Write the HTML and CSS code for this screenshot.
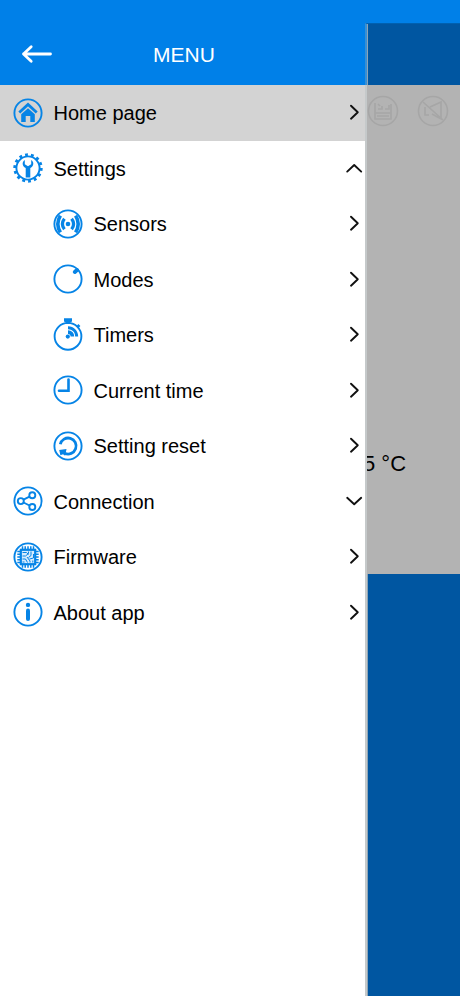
FILE: index.html
```html
<!DOCTYPE html>
<html lang="en">
<head>
<meta charset="utf-8">
<title>Menu</title>
<link rel="stylesheet" href="styles.css">
</head>
<body>
<svg class="defs" width="0" height="0">
  <symbol id="right" viewBox="0 0 20 20"><path d="M7 3.7 13.8 10.2 7 16.7"/></symbol>
  <symbol id="down" viewBox="0 0 20 20"><path d="M3.2 6.8 10.2 13.2 17.2 6.8"/></symbol>
  <symbol id="up" viewBox="0 0 20 20"><path d="M3.2 13.6 10.2 7 17.2 13.6"/></symbol>
</svg>
<div class="screen">
  <aside class="drawer">
    <header class="header">
      <svg class="back" viewBox="0 0 32 20"><path d="M30.5 10H3.5M11.2 2.8 3.5 10l7.7 7.2"/></svg>
      <h1 class="title">MENU</h1>
    </header>
    <nav class="menu">
      <a class="row active">
        <svg class="icon" viewBox="0 0 32 32"><circle cx="16" cy="16" r="13.6"/><path class="thick" d="m7.3 15.5 8.7-8 8.7 8"/><path class="fill" d="M9.2 17.2 16 11.2l6.8 6v7.8h-4.5v-6h-4.6v6H9.2z"/></svg>
        <span class="label">Home page</span><svg class="chevron"><use href="#right"/></svg>
      </a>
      <a class="row">
        <svg class="icon" viewBox="0 0 32 32"><circle cx="16" cy="16" r="11.6"/><circle class="teeth" cx="16" cy="16" r="13.2" pathLength="140"/><path class="fill" d="M12.8 7.9v4.3l3.2 2 3.2-2V7.9c2.9 1.7 3 6-.9 8.1v9.6h-4.6V16c-3.9-2.1-3.8-6.4-.9-8.1z"/></svg>
        <span class="label">Settings</span><svg class="chevron"><use href="#up"/></svg>
      </a>
      <a class="row sub">
        <svg class="icon" viewBox="0 0 32 32"><circle cx="16" cy="16" r="13.6"/><circle class="fill" cx="16" cy="16" r="2.3"/><path class="wave" d="M12.4 10.7q-4 5.3 0 10.6M19.6 10.7q4 5.3 0 10.6"/><path class="wave wide" d="M8.4 7.6q-5.2 8.4 0 16.8M23.6 7.6q5.2 8.4 0 16.8"/></svg>
        <span class="label">Sensors</span><svg class="chevron"><use href="#right"/></svg>
      </a>
      <a class="row sub">
        <svg class="icon" viewBox="0 0 32 32"><circle cx="16" cy="16" r="13.6"/><path class="knob" d="m22.8 9 2.2-2"/></svg>
        <span class="label">Modes</span><svg class="chevron"><use href="#right"/></svg>
      </a>
      <a class="row sub">
        <svg class="icon" viewBox="0 0 32 32"><circle cx="16" cy="17.3" r="13.4"/><path class="fill" d="M12-.8h8v3.2l-2 1.2V5h-4V3.600l-2-1.200z"/><path class="thick" d="m25.2 8.200 2.200-2.200"/><circle class="fill" cx="15.800" cy="17.600" r="2.100"/><path class="fill" d="M16 7.300c5.800 0 10.200 4.400 10.200 10.200h-3c0-4.200-3-7.200-7.200-7.200z"/><path class="wave wide" d="M16 13.100c2.600 0 4.400 1.800 4.400 4.400"/></svg>
        <span class="label">Timers</span><svg class="chevron"><use href="#right"/></svg>
      </a>
      <a class="row sub">
        <svg class="icon" viewBox="0 0 32 32"><circle cx="16" cy="16" r="13.6"/><path class="hand" d="M16.5 5.5v11.200H7"/></svg>
        <span class="label">Current time</span><svg class="chevron"><use href="#right"/></svg>
      </a>
      <a class="row sub">
        <svg class="icon" viewBox="0 0 32 32"><circle cx="16" cy="16" r="13.6"/><path class="thick" d="M8.300 14.300a8 8 0 1 1 4.500 9"/><path class="fill" d="m7.200 20 7.300-1-1.300 6.800-2.200-1.600-2.600 1z"/></svg>
        <span class="label">Setting reset</span><svg class="chevron"><use href="#right"/></svg>
      </a>
      <a class="row">
        <svg class="icon" viewBox="0 0 32 32"><circle cx="16" cy="16" r="13.6"/><circle cx="8.800" cy="16.100" r="3"/><circle cx="20.300" cy="10.200" r="3"/><circle cx="20.300" cy="22" r="3"/><path d="m11.500 14.700 6-3M11.500 17.500l6 3"/></svg>
        <span class="label">Connection</span><svg class="chevron"><use href="#down"/></svg>
      </a>
      <a class="row">
        <svg class="icon" viewBox="0 0 32 32"><circle cx="16" cy="16" r="13.6"/><path class="pins" d="M10.500 5.300v21.400M13.200 5.300v21.400M16 5.300v21.400M18.800 5.300v21.400M21.500 5.300v21.400M5.300 10.500h21.400M5.300 13.200h21.400M5.300 16h21.400M5.300 18.800h21.400M5.300 21.500h21.400"/><rect class="chip" x="8.800" y="8.800" width="14.400" height="14.400"/><path class="trace" d="M10.500 11.500h4l2 2M10.500 15h3l3-2.500v-2M19 10.500v4l-2.500 2M21.500 13v4l-4 1M10.500 18h3l2 3.500M10.500 21h2M15 16l3 4v1.500M20.800 19.500v2"/></svg>
        <span class="label">Firmware</span><svg class="chevron"><use href="#right"/></svg>
      </a>
      <a class="row">
        <svg class="icon" viewBox="0 0 32 32"><circle cx="16" cy="16" r="13.6"/><circle class="fill" cx="16" cy="8.900" r="2.200"/><path class="stem" d="M16 14.600v8.400"/></svg>
        <span class="label">About app</span><svg class="chevron"><use href="#right"/></svg>
      </a>
    </nav>
  </aside>
  <main class="page">
    <div class="page-bar"></div>
    <section class="panel">
      <div class="status">
        <svg class="faint" viewBox="0 0 32 32"><circle cx="16" cy="16" r="14.500"/><path d="M8 8v16h16V9M8 18h16M10 21h12M11 14h4v-3M18 14h4v-4M11 9l2 2"/></svg>
        <svg class="faint" viewBox="0 0 32 32"><circle cx="16" cy="16" r="14.500"/><path d="m6 7 20 18M8 12v8h4M13 12l11-5v17l-9-5"/></svg>
      </div>
      <div class="temperature">5 °C</div>
    </section>
  </main>
</div>
</body>
</html>
```

FILE: styles.css
```css
* { box-sizing: border-box; }
body {
  margin: 0;
  font-family: "Liberation Sans", Arial, sans-serif;
  color: #000;
}
.defs { display: block; }
.screen {
  display: flex;
  width: 460px;
  height: 996px;
  overflow: hidden;
  background: #0080e8;
}
.drawer {
  display: flex;
  flex-direction: column;
  width: 365px;
  flex: none;
}
.header {
  display: flex;
  align-items: center;
  height: 85px;
  padding: 23px 0 0 20px;
  flex: none;
}
.back {
  width: 32px;
  height: 20px;
  fill: none;
  stroke: #fff;
  stroke-width: 2.8;
  stroke-linecap: round;
  stroke-linejoin: round;
}
.title {
  margin: 1px 0 0 101px;
  font-size: 21px;
  font-weight: 400;
  line-height: 24px;
  color: #fff;
}
.menu { flex: 1; background: #fff; }
.row {
  display: flex;
  align-items: center;
  height: 55.5px;
  padding: 0 1px 0 12px;
}
.sub { padding-left: 52px; }
.active { background: #d3d3d3; }
.label {
  flex: 1;
  margin-left: 9.5px;
  font-size: 20px;
  line-height: 24px;
  padding-top: 1px;
}
.icon {
  width: 32px;
  height: 32px;
  margin-top: -0.5px;
  overflow: visible;
  fill: none;
  stroke: #0684e6;
  stroke-width: 1.9;
}
.icon .fill { fill: #0684e6; stroke: none; }
.icon .thick { stroke-width: 2.8; }
.icon .teeth { stroke-width: 3; stroke-dasharray: 4.8 5.2; }
.icon .wave { stroke-width: 3.2; }
.icon .wide { stroke-width: 3.6; }
.icon .knob { stroke-width: 4; stroke-linecap: round; }
.icon .hand { stroke-width: 2.6; stroke-linecap: round; }
.icon .stem { stroke-width: 4; stroke-linecap: round; }
.icon .pins { stroke-width: 1.5; }
.icon .chip { fill: #d6ebfd; stroke-width: 2.2; }
.icon .trace { stroke-width: 1; }
.chevron {
  width: 20px;
  height: 20px;
  margin-top: -1px;
  fill: none;
  stroke: #111;
  stroke-width: 1.9;
  stroke-linecap: round;
  stroke-linejoin: round;
}
.page {
  flex: 1;
  min-width: 0;
  margin-top: 23px;
  border-left: 2px solid #c5c9ca;
  background: #0056a1;
  box-shadow: inset 1px 0 #8fa5b5;
}
.page-bar {
  height: 62px;
  margin-left: -2px;
  border-left: 2px solid #388fd4;
  border-top: 1px solid #0060b0;
}
.panel {
  height: 488.5px;
  overflow: hidden;
  background: #b3b3b3;
}
.status {
  display: flex;
  gap: 18px;
  padding-top: 10px;
}
.faint {
  width: 32px;
  height: 32px;
  flex: none;
  fill: none;
  stroke: #a6a6a6;
  stroke-width: 1.6;
}
.temperature {
  margin: 324px 0 0 -4px;
  font-size: 22px;
  line-height: 26px;
}
```
